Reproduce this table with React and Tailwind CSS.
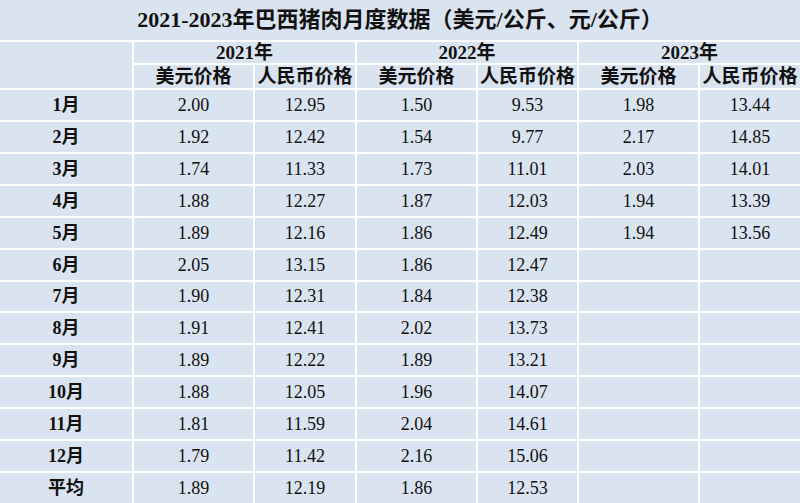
const years = ['2021年', '2022年', '2023年'];

const rows = [
  ['1月', '2.00', '12.95', '1.50', '9.53', '1.98', '13.44'],
  ['2月', '1.92', '12.42', '1.54', '9.77', '2.17', '14.85'],
  ['3月', '1.74', '11.33', '1.73', '11.01', '2.03', '14.01'],
  ['4月', '1.88', '12.27', '1.87', '12.03', '1.94', '13.39'],
  ['5月', '1.89', '12.16', '1.86', '12.49', '1.94', '13.56'],
  ['6月', '2.05', '13.15', '1.86', '12.47', '', ''],
  ['7月', '1.90', '12.31', '1.84', '12.38', '', ''],
  ['8月', '1.91', '12.41', '2.02', '13.73', '', ''],
  ['9月', '1.89', '12.22', '1.89', '13.21', '', ''],
  ['10月', '1.88', '12.05', '1.96', '14.07', '', ''],
  ['11月', '1.81', '11.59', '2.04', '14.61', '', ''],
  ['12月', '1.79', '11.42', '2.16', '15.06', '', ''],
  ['平均', '1.89', '12.19', '1.86', '12.53', '', ''],
];

const font = { fontFamily: '"Liberation Serif", "Noto Sans CJK SC", serif' };

export default function App() {
  return (
    <div
      className="w-[800px] h-[503px] overflow-hidden bg-white grid gap-[2px] text-[#111]"
      style={{
        ...font,
        gridTemplateColumns: '132px 119px 100px 119px 99px 119px 100px',
        gridTemplateRows: '40px 21px 23px repeat(13, 1fr)',
      }}
    >
      {/* Title */}
      <div className="col-span-7 bg-[#dae3f0] flex items-center justify-center text-[22px] font-bold leading-none">
        2021-2023年巴西猪肉月度数据（美元/公斤、元/公斤）
      </div>

      {/* Header */}
      <div className="row-span-2 bg-[#dae3f0]" />
      {years.map(y => (
        <div key={y} className="col-span-2 bg-[#dae3f0] flex items-center justify-center text-[19px] font-bold leading-none">
          {y}
        </div>
      ))}
      {years.map(y => [
        <div key={y + 'u'} className="bg-[#dae3f0] flex items-center justify-center text-[19px] font-bold leading-none">
          美元价格
        </div>,
        <div key={y + 'r'} className="bg-[#dae3f0] flex items-center justify-center text-[19px] font-bold leading-none whitespace-nowrap">
          人民币价格
        </div>,
      ])}

      {/* Body */}
      {rows.map(r =>
        r.map((v, i) => (
          <div
            key={r[0] + i}
            className={
              'bg-[#dae3f0] flex items-center justify-center text-[18px] leading-none ' +
              (i === 0 ? 'font-bold' : '')
            }
          >
            {v}
          </div>
        ))
      )}
    </div>
  );
}
